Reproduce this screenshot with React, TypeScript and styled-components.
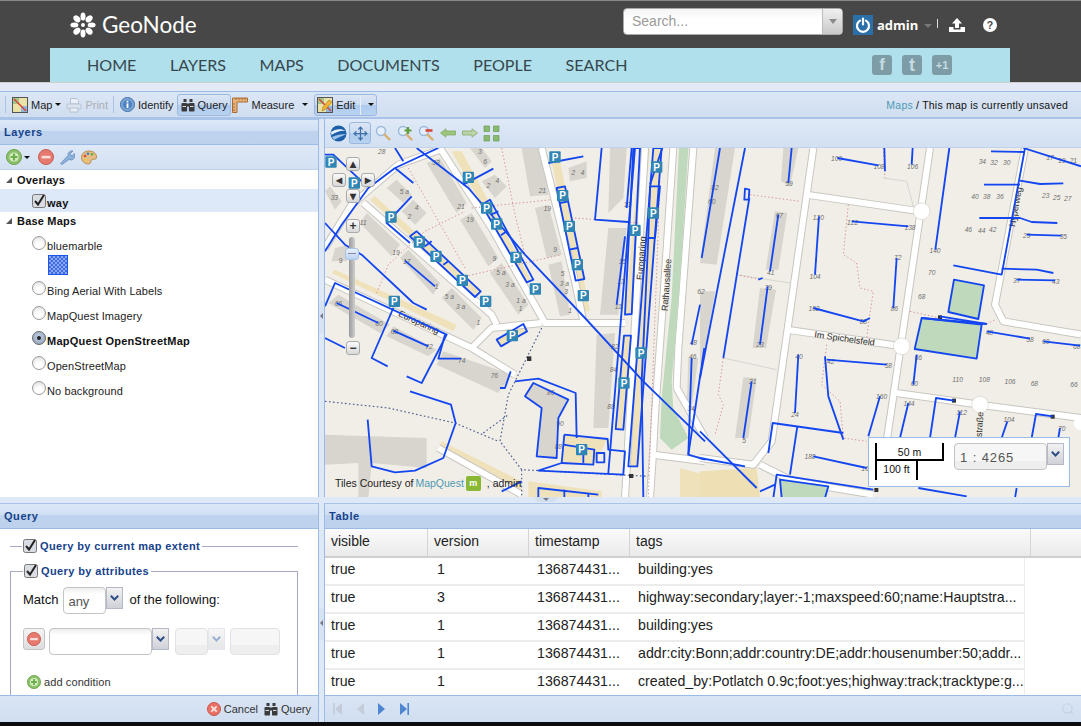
import React from "react";
import styled, { createGlobalStyle, css } from "styled-components";
import { Move, Search as SearchGlyph } from "lucide-react";

const GlobalStyle = createGlobalStyle`
  html, body {
    margin: 0;
    padding: 0;
    height: 726px;
    overflow: hidden;
    background: #dfe8f6;
    font-family: "Liberation Sans", Arial, sans-serif;
  }
  fieldset { min-width: 0; }
`;

const Page = styled.div`
  width: 1081px;
  height: 726px;
  display: flex;
  flex-direction: column;
  overflow: hidden;
`;

const Spacer = styled.span<{ $w: number }>`
  width: ${(p) => p.$w}px;
  flex: none;
`;

/* ---------- site header ---------- */
const SiteHeader = styled.header`
  height: 82px;
  flex: none;
  background: #474747;
  border-top: 1px solid #8a8a8a;
  box-sizing: border-box;
  display: flex;
  flex-direction: column;
`;
const HeaderTop = styled.div`
  height: 47px;
  display: flex;
  align-items: flex-start;
  padding-left: 70px;
`;
const Logo = styled.div`
  display: flex;
  align-items: center;
  gap: 6px;
  margin-top: 11px;
  color: #fff;
  font: 400 22.5px/26px Lato, sans-serif;
  width: 553px;
`;
const SearchBox = styled.div`
  width: 220px;
  height: 27px;
  margin-top: 7px;
  box-sizing: border-box;
  border-radius: 4px;
  border: 1px solid #aaa;
  background: linear-gradient(#f4f4f4, #fff 40%);
  display: flex;
  overflow: hidden;
`;
const SearchInput = styled.div`
  flex: 1;
  padding-left: 8px;
  color: #9a9a9a;
  font: 14px/24px "Liberation Sans", sans-serif;
`;
const SearchTrigger = styled.div`
  width: 19px;
  background: linear-gradient(#f0f0f0, #c9c9c9);
  border-left: 1px solid #bbb;
  display: flex;
  align-items: center;
  justify-content: center;
  &::after {
    content: "";
    border: 4px solid transparent;
    border-top: 5px solid #8a8a8a;
    border-bottom: 0;
  }
`;
const UserBlock = styled.div`
  display: flex;
  align-items: center;
  margin: 14px 0 0 10px;
`;
const PowerBadge = styled.div`
  width: 20px;
  height: 20px;
  background: #2a6fa8;
  display: flex;
  align-items: center;
  justify-content: center;
`;
const UserName = styled.span`
  color: #fff;
  font: 700 13px/20px "Open Sans", sans-serif;
  margin-left: 4px;
`;
const UserCaret = styled.span`
  margin: 2px 0 0 6px;
  border: 4px solid transparent;
  border-top: 4px solid #777;
  border-bottom: 0;
`;
const UserSep = styled.span`
  width: 1px;
  height: 9px;
  background: #ddd;
  margin: -4px 11px 0 5px;
`;
const Nav = styled.nav`
  margin-left: 50px;
  width: 960px;
  height: 34px;
  background: #b0e0ec;
  box-sizing: border-box;
  padding-left: 37px;
  display: flex;
  align-items: center;
  gap: 33.5px;
`;
const NavLink = styled.a`
  color: #37474d;
  font: 400 16.1px/34px Lato, sans-serif;
`;
const SocialGroup = styled.div`
  margin-left: auto;
  margin-right: 58px;
  display: flex;
  gap: 10px;
`;
const Social = styled.div<{ $size?: number }>`
  width: 20px;
  height: 20px;
  border-radius: 3px;
  background: #7e9ca6;
  color: #c4dce2;
  display: flex;
  align-items: center;
  justify-content: center;
  font: 700 ${(p) => p.$size ?? 17}px/20px "Liberation Sans", sans-serif;
`;

/* ---------- main toolbar ---------- */
const TopStrip = styled.div`
  height: 10px;
  flex: none;
  box-sizing: border-box;
  background: #e3e9f5;
  border-top: 1px solid #cfcfcf;
  border-bottom: 1px solid #99bbe8;
`;
const MainToolbar = styled.div`
  height: 27px;
  flex: none;
  box-sizing: border-box;
  background: linear-gradient(#dbe6f5, #d0def0);
  border-bottom: 2px solid #a9c4e8;
  display: flex;
  align-items: center;
  padding-left: 2px;
  padding-right: 13px;
  font-size: 11px;
  color: #222;
`;
const ToolSep = styled.span<{ $space?: number }>`
  width: 1px;
  height: 17px;
  background: #a9c4e8;
  margin: 0 ${(p) => p.$space ?? 4}px;
`;
const ToolButton = styled.div<{ $active?: boolean; $off?: boolean; $pad?: number; $left?: number }>`
  display: inline-flex;
  align-items: center;
  gap: 3px;
  height: 22px;
  padding: 0 ${(p) => p.$pad ?? 3}px;
  margin-left: ${(p) => p.$left ?? 0}px;
  box-sizing: border-box;
  border-radius: 3px;
  border: 1px solid transparent;
  white-space: nowrap;
  font: 11px/20px "Liberation Sans", sans-serif;
  ${(p) => p.$off && css`color: #9a9a9a; opacity: 0.7;`}
  ${(p) =>
    p.$active &&
    css`
      border-color: #9cb8de;
      background: linear-gradient(#dbe6f5 0, #cbdaf0 50%, #aecbee 52%, #b9d2f1 100%);
    `}
`;
const MoveButton = styled(ToolButton)`
  width: 22px;
  justify-content: center;
`;
const Caret = styled.span<{ $gap?: number }>`
  border: 3px solid transparent;
  border-top: 3px solid #111;
  border-bottom: 0;
  margin-left: ${(p) => p.$gap ?? 0}px;
`;
const SplitLine = styled.span`
  width: 1px;
  height: 20px;
  background: #e8f0fb;
  margin: 0 2px;
`;
const MapCrumb = styled.div`
  margin-left: auto;
  font: 10.5px/20px "Liberation Sans", sans-serif;
  letter-spacing: 0.22px;
  color: #111;
`;
const CrumbLink = styled.span`
  color: #4f9ab5;
`;

/* ---------- panels ---------- */
const Workspace = styled.div`
  display: grid;
  grid-template-columns: 319px 6px 1fr;
  grid-template-rows: 378px 6px 219px;
  flex: none;
`;
const Panel = styled.section<{ $edge?: boolean }>`
  display: flex;
  flex-direction: column;
  min-height: 0;
  overflow: hidden;
  background: #fff;
  box-sizing: border-box;
  border-right: ${(p) => (p.$edge ? "1px solid #99bbe8" : "0")};
`;
const PanelTitle = styled.div`
  height: 26px;
  flex: none;
  box-sizing: border-box;
  padding-left: 4px;
  color: #15428b;
  font: 700 11px/25px "Liberation Sans", sans-serif;
  letter-spacing: 0.55px;
  background: linear-gradient(#dce8f7, #cfdff3 46%, #bfd3ee 48%, #bcd1ed);
  border-top: 1px solid #a9c4e8;
  border-bottom: 1px solid #99bbe8;
`;
const Splitter = styled.div`
  background: #dfe8f6;
  position: relative;
  border-right: 1px solid #99bbe8;
  box-sizing: border-box;
`;
const HorizontalSplit = styled.div`
  grid-column: 1 / -1;
  background: #dfe8f6;
  position: relative;
`;
const CollapseHandle = styled.span<{ $top: number }>`
  position: absolute;
  left: 0;
  top: ${(p) => p.$top}px;
  width: 5px;
  height: 32px;
  background: #d7e3f3;
  &::after {
    content: "";
    position: absolute;
    top: 12px;
    left: 1px;
    border: 3px solid transparent;
    border-right: 3px solid #778;
    border-left: 0;
  }
`;
const MapSplitHandle = styled.span`
  position: absolute;
  left: 535px;
  top: 0;
  width: 22px;
  height: 5px;
  background: #d2dfef;
  border-radius: 0 0 6px 6px;
  &::after {
    content: "";
    position: absolute;
    left: 8px;
    top: 1px;
    border: 3px solid transparent;
    border-top: 3px solid #778;
    border-bottom: 0;
  }
`;
const IconBar = styled.div`
  height: 25px;
  flex: none;
  box-sizing: border-box;
  background: linear-gradient(#dfe9f7, #d2e0f2);
  border-bottom: 1px solid #c0d3ec;
  display: flex;
  align-items: center;
  padding-left: 6px;
`;
const MapToolbar = styled(IconBar)`
  height: 29px;
  padding-left: 5px;
`;

/* ---------- layer tree ---------- */
const TreeHead = styled.div<{ $height?: number }>`
  height: ${(p) => p.$height ?? 19}px;
  display: flex;
  align-items: center;
  font: 700 11px "Liberation Sans", sans-serif;
  letter-spacing: 0.2px;
  color: #111;
  padding-left: 6px;
  gap: 5px;
`;
const TreeArrow = styled.span`
  width: 0;
  height: 0;
  border-left: 6px solid transparent;
  border-bottom: 6px solid #555;
`;
const LayerRow = styled.div<{ $selected?: boolean; $height?: number; $top?: number }>`
  height: ${(p) => p.$height ?? 25}px;
  margin-top: ${(p) => p.$top ?? 0}px;
  display: flex;
  align-items: center;
  padding-left: 32px;
  gap: 1px;
  font: 11px "Liberation Sans", sans-serif;
  letter-spacing: 0.1px;
  color: #222;
  ${(p) => p.$selected && css`background: #dde8f8; font-weight: 700; color: #111;`}
`;
const RadioDot = styled.span<{ $on?: boolean }>`
  width: 14px;
  height: 14px;
  border-radius: 50%;
  box-sizing: border-box;
  border: 1px solid #9a9a9a;
  margin-top: -5px;
  flex: none;
  background: radial-gradient(circle at 50% 70%, #fff 30%, #d8d8d8 100%);
  display: flex;
  align-items: center;
  justify-content: center;
  ${(p) =>
    p.$on &&
    css`
      border-color: #666;
      background: radial-gradient(circle at 50% 40%, #b9c7dc 20%, #8b9ab4 100%);
      &::after {
        content: "";
        width: 4px;
        height: 4px;
        border-radius: 50%;
        background: #222;
      }
    `}
`;
const RowLabel = styled.span<{ $strong?: boolean; $shift?: number }>`
  margin-top: ${(p) => p.$shift ?? 1}px;
  ${(p) => p.$strong && css`font-weight: 700; color: #111; letter-spacing: 0.25px;`}
`;
const LegendSwatch = styled.div`
  width: 20px;
  height: 20px;
  margin: -3px 0 0 48px;
  box-sizing: border-box;
  border: 1px solid #1a55f0;
  background-color: #5f86ea;
  background-image: repeating-conic-gradient(#3d6ce6 0 25%, #8ba7ef 0 50%);
  background-size: 4px 4px;
`;
const CheckWrap = styled.span`
  display: inline-flex;
  flex: none;
`;

/* ---------- query form ---------- */
const QueryBody = styled.div`
  flex: 1;
  min-height: 0;
  overflow: hidden;
  padding: 10px 20px 0 10px;
  font: 11px "Liberation Sans", sans-serif;
`;
const QueryFieldset = styled.fieldset<{ $collapsed?: boolean }>`
  margin: 0 0 11px;
  padding: 0 0 0 12px;
  border: 0;
  border-top: 1px solid #a4a8c4;
  ${(p) =>
    !p.$collapsed &&
    css`
      border: 1px solid #a4a8c4;
      height: 200px;
    `}
`;
const QueryLegend = styled.legend`
  display: flex;
  align-items: center;
  gap: 3px;
  padding: 0 2px 0 1px;
  margin-left: 0;
  color: #15428b;
  font: 700 11px/14px "Liberation Sans", sans-serif;
  letter-spacing: 0.38px;
`;
const MatchRow = styled.div`
  display: flex;
  align-items: flex-start;
  margin-top: 9px;
  font: 13px/26px "Liberation Sans", sans-serif;
  color: #111;
`;
const FieldBox = styled.div<{ $w: number; $off?: boolean; $left?: number }>`
  width: ${(p) => p.$w}px;
  height: 27px;
  margin-left: ${(p) => p.$left ?? 0}px;
  box-sizing: border-box;
  flex: none;
  border: 1px solid ${(p) => (p.$off ? "#e2e2e2" : "#c4c4c4")};
  border-radius: 4px;
  padding-left: 4px;
  color: #555;
  font: 13px/28px "Liberation Sans", sans-serif;
  background: ${(p) =>
    p.$off ? "linear-gradient(#f6f6f6 0 65%, #eee 66%)" : "linear-gradient(#eee, #fff 25%)"};
`;
const ScaleField = styled(FieldBox)`
  font-size: 13px;
  padding-left: 5px;
  letter-spacing: 0.9px;
  background: linear-gradient(#f6f6f6 0 68%, #eee 69%);
`;
const FieldTrigger = styled.div<{ $off?: boolean }>`
  width: 17px;
  height: 22px;
  flex: none;
  box-sizing: border-box;
  border: 1px solid ${(p) => (p.$off ? "#d8dfea" : "#b5b8c8")};
  background: ${(p) =>
    p.$off ? "linear-gradient(#f3f3f3,#dcdcdc)" : "linear-gradient(#f2f2f2,#cfd1d8)"};
  display: flex;
  align-items: center;
  justify-content: center;
  opacity: ${(p) => (p.$off ? 0.7 : 1)};
`;
const FollowText = styled.span`
  margin-left: 6px;
`;
const ConditionRow = styled.div`
  display: flex;
  align-items: flex-start;
  margin-top: 14px;
`;
const RemoveButton = styled.div`
  width: 22px;
  height: 22px;
  box-sizing: border-box;
  margin-right: 4px;
  flex: none;
  border: 1px solid #c4c4c4;
  border-radius: 3px;
  background: linear-gradient(#f4f4f4, #ddd);
  display: flex;
  align-items: center;
  justify-content: center;
`;
const AddCondition = styled.div`
  display: flex;
  align-items: center;
  gap: 3px;
  margin: 19px 0 0 4px;
  color: #333;
  font: 11px/16px "Liberation Sans", sans-serif;
  letter-spacing: 0.1px;
`;
const PanelFooter = styled.div<{ $end?: boolean }>`
  height: 27px;
  flex: none;
  box-sizing: border-box;
  background: linear-gradient(#dae5f4, #d0def1);
  border-top: 1px solid #99bbe8;
  display: flex;
  align-items: center;
  gap: ${(p) => (p.$end ? "6px" : "10px")};
  justify-content: ${(p) => (p.$end ? "flex-end" : "flex-start")};
  padding: ${(p) => (p.$end ? "0 7px 0 0" : "0 6px 0 7px")};
`;
const FooterAction = styled.span`
  display: inline-flex;
  align-items: center;
  gap: 3px;
  color: #333;
  font: 11px "Liberation Sans", sans-serif;
`;
const PagerEnd = styled.span`
  margin-left: auto;
  display: flex;
`;

/* ---------- table ---------- */
const TableHead = styled.div`
  height: 29px;
  flex: none;
  box-sizing: border-box;
  display: grid;
  grid-template-columns: 103px 101px 101px 401px 1fr;
  background: linear-gradient(#fafafa, #f3f3f3 50%, #e9eaec);
  border-bottom: 2px solid #cfcfcf;
`;
const HeadCell = styled.div`
  box-sizing: border-box;
  padding-left: 6px;
  font: 14px/25px "Liberation Sans", sans-serif;
  color: #222;
  border-right: 1px solid #d4d4d4;
  &:last-child { border-right: 0; }
`;
const TableRows = styled.div`
  flex: 1;
  min-height: 0;
  overflow: hidden;
  width: 703px;
`;
const TableRow = styled.div`
  height: 28px;
  width: 700px;
  box-sizing: border-box;
  display: grid;
  grid-template-columns: 103px 101px 101px 1fr;
  border-bottom: 2px solid #ececec;
  border-right: 1px solid #ececec;
`;
const Cell = styled.div<{ $left: number }>`
  font: 14.2px/22px "Liberation Sans", sans-serif;
  color: #222;
  padding-left: ${(p) => p.$left}px;
  white-space: nowrap;
`;

/* ---------- map ---------- */
const MapArea = styled.div`
  position: relative;
  flex: 1;
  min-height: 0;
  overflow: hidden;
  background: #f0ede6;
`;
const MapSvg = styled.svg`
  display: block;
  width: 756px;
  height: 350px;
`;
const PadButton = styled.div<{ $x: number; $y: number }>`
  position: absolute;
  left: ${(p) => p.$x}px;
  top: ${(p) => p.$y}px;
  width: 14px;
  height: 14px;
  box-sizing: border-box;
  border: 1px solid #aaa;
  border-radius: 3px;
  background: linear-gradient(#fafafa, #d8d8d8);
  color: #333;
  display: flex;
  align-items: center;
  justify-content: center;
  font: 700 12px/12px "Liberation Sans", sans-serif;
`;
const SliderTrack = styled.div`
  position: absolute;
  left: 24px;
  top: 89px;
  width: 6px;
  height: 101px;
  border-radius: 3px;
  background: linear-gradient(90deg, #9a9a9a, #cfcfcf);
`;
const SliderHandle = styled.div`
  position: absolute;
  left: 20px;
  top: 100px;
  width: 14px;
  height: 12px;
  border-radius: 3px;
  border: 1px solid #a9c4e8;
  background: linear-gradient(#e8f0fb, #bcd3f2);
  box-sizing: border-box;
  &::after {
    content: "";
    display: block;
    margin: 4px 2px;
    height: 1px;
    background: #88a;
  }
`;
const Attribution = styled.div`
  position: absolute;
  left: 10px;
  bottom: 6px;
  display: flex;
  align-items: center;
  gap: 2px;
  color: #222;
  font: 10.5px/16px "Liberation Sans", sans-serif;
`;
const AttrLink = styled.span`
  color: #4f9ab5;
`;
const MqBadge = styled.span`
  width: 15px;
  height: 15px;
  margin-right: 4px;
  border-radius: 2px;
  background: #8ab835;
  color: #fff;
  font: 700 9px/15px "Liberation Sans", sans-serif;
  text-align: center;
`;
const ScaleBox = styled.div`
  position: absolute;
  left: 543px;
  top: 289px;
  width: 202px;
  height: 50px;
  box-sizing: border-box;
  background: #fff;
  border: 1px solid #99bbe8;
  display: flex;
  padding: 5px 0 0 6px;
`;
const ScaleBars = styled.div`
  width: 69px;
  flex: none;
  font: 10.5px/16px "Liberation Sans", sans-serif;
  color: #111;
  text-align: center;
`;
const ScaleTop = styled.div`
  height: 18px;
  box-sizing: border-box;
  border: 2px solid #000;
  border-top: 0;
  padding-top: 1px;
`;
const ScaleBottom = styled.div`
  height: 19px;
  width: 43px;
  box-sizing: border-box;
  border: 2px solid #000;
  border-top: 0;
  border-bottom: 0;
`;
const ScaleCombo = styled.div`
  display: flex;
  margin-left: 10px;
`;
const BottomEdge = styled.div`
  flex: 1;
  background: #0c0c10;
`;

/* ---------- small drawings ---------- */
const Flower = () => (
  <svg width="26" height="26" viewBox="-13 -13 26 26">
    {[0, 45, 90, 135, 180, 225, 270, 315].map((a) => (
      <ellipse key={a} cx="0" cy="-8.6" rx={a % 90 ? 2.9 : 2.5} ry="4" fill="#fff" transform={`rotate(${a})`} />
    ))}
    <circle r="2" fill="#fff" />
  </svg>
);
const PowerIcon = () => (
  <svg width="16" height="16" viewBox="0 0 16 16" fill="none" stroke="#fff" strokeWidth="2.2" strokeLinecap="round">
    <path d="M5 3.6a6 6 0 1 0 6 0" />
    <path d="M8 1.5v6" />
  </svg>
);
const UploadIcon = () => (
  <svg width="16" height="14" viewBox="0 0 16 14" fill="#fff">
    <path d="M8 0l5 5.5H10V10H6V5.5H3z" />
    <path d="M0 9h4.5v2.5h7V9H16v5H0z" />
  </svg>
);
const HelpIcon = () => (
  <svg width="14" height="14" viewBox="0 0 14 14">
    <circle cx="7" cy="7" r="7" fill="#fff" />
    <text x="7" y="11" textAnchor="middle" fontFamily="Liberation Sans" fontWeight="700" fontSize="10.5" fill="#474747">?</text>
  </svg>
);
const MapIcon = ({ pencil }: { pencil?: boolean }) => (
  <svg width="16" height="16" viewBox="0 0 16 16">
    <rect x=".5" y=".5" width="15" height="15" fill="#e9e3a8" stroke="#555" />
    <path d="M1 1h6v6H1z" fill="#9fc78a" />
    <path d="M9 9h6v6H9z" fill="#8fb7e0" />
    <path d="M2 2l12 12" stroke="#d8483a" strokeWidth="1.6" />
    {pencil && <path d="M5 14l1-4 6-7 3 2-6 7z" fill="#f2b632" stroke="#a5701a" strokeWidth=".6" />}
  </svg>
);
const PrintIcon = () => (
  <svg width="16" height="16" viewBox="0 0 16 16" fill="#dfe5ee" stroke="#a9b3c2">
    <path d="M4.5 7V1.5h6l2 2V7z" fill="#f4f6fa" />
    <rect x="1" y="7" width="14" height="5" rx="1.5" />
    <rect x="4" y="11" width="8" height="4" fill="#f4f6fa" />
  </svg>
);
const InfoIcon = () => (
  <svg width="15" height="15" viewBox="0 0 15 15">
    <circle cx="7.5" cy="7.5" r="7" fill="#7ea7d8" stroke="#3f6ea8" />
    <circle cx="7.5" cy="7.5" r="4.6" fill="#4f82c0" />
    <rect x="6.6" y="6.4" width="1.8" height="4.6" fill="#fff" />
    <rect x="6.6" y="3.8" width="1.8" height="1.7" fill="#fff" />
  </svg>
);
const Binoculars = () => (
  <svg width="14" height="14" viewBox="0 0 14 14" fill="#3b3b3b">
    <rect x="2.5" y="1" width="3" height="3" />
    <rect x="8.5" y="1" width="3" height="3" />
    <rect x="0.5" y="5" width="5.5" height="8.5" rx=".8" />
    <rect x="8" y="5" width="5.5" height="8.5" rx=".8" />
    <rect x="6" y="5.5" width="2" height="3" />
    <rect x="1.5" y="8" width="3.5" height="1" fill="#ddd" />
    <rect x="9" y="8" width="3.5" height="1" fill="#ddd" />
  </svg>
);
const RulerIcon = () => (
  <svg width="16" height="16" viewBox="0 0 16 16">
    <path d="M.5 1h15v4H5v10.5H.5z" fill="#e6b27a" stroke="#a86c34" />
    <path d="M4 1v2M7 1v2M10 1v2M13 1v2M1 7h2M1 10h2M1 13h2" stroke="#a86c34" />
  </svg>
);
const PlusCircle = ({ size = 16 }: { size?: number }) => (
  <svg width={size} height={size} viewBox="0 0 16 16">
    <circle cx="8" cy="8" r="7.5" fill="#8cc06a" stroke="#6aa24c" />
    <circle cx="8" cy="8" r="4.6" fill="#d6eec4" />
    <path d="M8 4.6v6.8M4.6 8h6.8" stroke="#6fae4e" strokeWidth="2.2" />
  </svg>
);
const MinusCircle = ({ size = 16 }: { size?: number }) => (
  <svg width={size} height={size} viewBox="0 0 16 16">
    <circle cx="8" cy="8" r="7.5" fill="#e77a6f" stroke="#c65a50" />
    <rect x="3.6" y="6.8" width="8.8" height="2.6" fill="#f7e0dc" />
  </svg>
);
const WrenchIcon = () => (
  <svg width="16" height="16" viewBox="0 0 16 16">
    <path d="M1.5 14.5l1-1 6.5-7a4 4 0 0 1 5-4.500L11.500 4.500l.5 1.800 1.800.5L15 4.500a4 4 0 0 1-5 6L3 15.500z" fill="#8eb1dc" stroke="#5f86b8" strokeWidth=".7" />
  </svg>
);
const PaletteIcon = () => (
  <svg width="16" height="15" viewBox="0 0 16 15">
    <path d="M8 1c4.500 0 7.500 2.500 7.500 6 0 3-3 2-4.500 2.500-1.500.5-.5 4.500-3.500 4.500C3.500 14 .5 11 .5 7.500 .5 3.500 4 1 8 1z" fill="#e5bd85" stroke="#b98c50" />
    <circle cx="4" cy="6" r="1.300" fill="#d8483a" />
    <circle cx="7" cy="3.800" r="1.300" fill="#3f7ecf" />
    <circle cx="11" cy="4.300" r="1.300" fill="#5fae4a" />
    <circle cx="4.600" cy="10" r="1.300" fill="#e9d23f" />
  </svg>
);
const CheckedBox = ({ size = 14 }: { size?: number }) => (
  <svg width={size} height={size} viewBox="0 0 14 14">
    <rect x=".5" y=".5" width="13" height="13" rx="2" fill="#d9dde3" stroke="#777" />
    <path d="M3 7l3 3.500L12 1" fill="none" stroke="#222" strokeWidth="2" />
  </svg>
);
const Chevron = ({ color = "#2f4f85" }: { color?: string }) => (
  <svg width="9" height="6" viewBox="0 0 9 6">
    <path d="M.8.8L4.500 4.500 8.200.8" fill="none" stroke={color} strokeWidth="2" />
  </svg>
);
const CancelIcon = () => (
  <svg width="14" height="14" viewBox="0 0 14 14">
    <circle cx="7" cy="7" r="6.500" fill="#ea7166" stroke="#c9564c" />
    <path d="M4.300 4.300l5.400 5.400M9.700 4.300l-5.400 5.400" stroke="#fbe4e0" strokeWidth="1.800" />
  </svg>
);
const GlobeIcon = () => (
  <svg width="17" height="17" viewBox="0 0 17 17">
    <circle cx="8.500" cy="8.500" r="8" fill="#1d5fa8" />
    <path d="M1 7c4-3 10-4 15-1-5-1-10 1-14.500 4z" fill="#eaf2fb" />
    <path d="M2 12c4-2 9-3 14-3-3 2-8 3.500-12 6z" fill="#9cc3ea" />
  </svg>
);
const MagnifierIcon = ({ mark }: { mark?: "plus" | "minus" }) => (
  <svg width="16" height="16" viewBox="0 0 16 16">
    <circle cx="6" cy="6" r="4.500" fill="#e3effb" stroke="#9cb8da" strokeWidth="1.400" />
    <path d="M9.500 9.500L14.500 14.500" stroke="#d9ae72" strokeWidth="2.400" strokeLinecap="round" />
    {mark === "plus" && <path d="M11 2v7M7.500 5.500h7" stroke="#5f9e3a" strokeWidth="2.200" />}
    {mark === "minus" && <path d="M7.500 5.500h7" stroke="#d8483a" strokeWidth="2.600" />}
  </svg>
);
const ArrowIcon = ({ flip }: { flip?: boolean }) => (
  <svg width="16" height="10" viewBox="0 0 16 10" transform={flip ? "scale(-1 1)" : undefined}>
    <path d="M.5 5L6 .8V3h9.500v4H6v2.200z" fill={flip ? "#bdd3a8" : "#9cc67c"} stroke="#7da360" strokeWidth=".7" />
  </svg>
);
const ExtentIcon = () => (
  <svg width="17" height="17" viewBox="0 0 17 17" fill="#8aba72" stroke="#6a9c55" strokeWidth=".7">
    <path d="M1 1h5.500v5.500H1zM10.500 1H16v5.500h-5.500zM1 10.500h5.500V16H1zM10.500 10.500H16V16h-5.500z" />
  </svg>
);
const PagerIcon = ({ kind, off }: { kind: "first" | "prev" | "next" | "last"; off?: boolean }) => {
  const fill = off ? "#c3ccd8" : "#4f86d2";
  const back = kind === "first" || kind === "prev";
  return (
    <svg width="12" height="14" viewBox="0 0 12 14">
      {back ? <path d="M10 1v12L3 7z" fill={fill} /> : <path d="M2 1v12l7-6z" fill={fill} />}
      {kind === "first" && <rect x="1" y="1" width="1.600" height="12" fill={fill} />}
      {kind === "last" && <rect x="9.400" y="1" width="1.600" height="12" fill={fill} />}
    </svg>
  );
};

/* ---------- map drawing data, in 3x coordinates of the two halves ---------- */
type Pts = number[];
const toPts = (p: Pts) => p.reduce((s, v, i) => s + (i % 2 ? `,${v} ` : `${v}`), "");

const westBuildings: Pts[] = [
  [305, 45, 345, 30, 425, 165, 395, 195],
  [405, 215, 440, 195, 520, 330, 490, 355],
  [495, 375, 530, 345, 610, 470, 580, 500],
  [350, 450, 380, 420, 470, 510, 445, 545],
  [225, 330, 250, 305, 345, 405, 325, 440],
  [105, 225, 125, 195, 225, 290, 200, 325],
  [185, 120, 215, 95, 260, 140, 235, 165],
  [230, 190, 265, 155, 305, 195, 270, 230],
  [0, 130, 15, 115, 50, 160, 30, 185],
  [435, 0, 470, 0, 500, 40, 480, 60],
  [470, 100, 510, 80, 545, 115, 510, 150],
  [590, 0, 650, 0, 670, 140, 615, 145],
  [630, 180, 670, 170, 710, 320, 665, 330],
  [670, 350, 710, 340, 735, 500, 705, 505],
  [730, 60, 785, 40, 785, 90, 735, 100],
  [850, 240, 905, 240, 880, 500, 825, 500],
  [855, 0, 905, 0, 895, 150, 850, 195],
  [815, 560, 870, 555, 850, 840, 805, 840],
  [30, 300, 70, 290, 65, 340, 20, 340],
  [10, 465, 40, 440, 195, 530, 165, 555],
  [185, 565, 205, 535, 335, 605, 310, 625],
  [335, 650, 355, 610, 560, 680, 520, 735],
  [600, 745, 625, 705, 730, 755, 700, 810, 695, 930, 635, 925, 650, 780],
  [0, 860, 305, 870, 305, 960, 140, 945, 130, 1050, 100, 1050, 100, 945, 0, 950],
  [1090, 630, 1120, 630, 1100, 780, 1085, 780],
];
const westYellow: Pts[] = [
  [380, 10, 410, 10, 620, 400, 600, 405],
  [680, 40, 705, 40, 795, 490, 770, 490],
  [135, 155, 150, 145, 470, 430, 455, 445],
  [20, 375, 30, 365, 395, 530, 385, 550],
  [900, 500, 925, 500, 975, 0, 945, 0],
  [872, 843, 895, 845, 918, 563, 897, 563],
  [910, 955, 937, 955, 1012, 0, 985, 0],
  [718, 860, 848, 873, 805, 950, 712, 945],
  [515, 575, 595, 528, 606, 550, 528, 595],
  [350, 880, 590, 1000, 590, 1050, 340, 905],
  [610, 1000, 830, 1030, 830, 1050, 610, 1050],
  [1065, 960, 1140, 980, 1140, 1050, 1065, 1050],
];
const westRoads: Pts[] = [
  [345, 0, 500, 240, 660, 525, 900, 525],
  [650, 0, 750, 400, 775, 520],
  [115, 165, 500, 500, 515, 530],
  [0, 395, 440, 600, 570, 680],
  [440, 600, 500, 540, 650, 525],
  [0, 300, 80, 170, 220, 50, 345, 5],
  [960, 0, 900, 1050],
  [1045, 0, 1015, 450, 990, 800, 985, 900, 975, 1050],
  [1105, 0, 1060, 600, 1055, 720, 1140, 870],
  [985, 920, 1140, 940],
  [340, 900, 590, 1040],
];
const eastBuildings: Pts[] = [
  [45, 0, 105, 0, 50, 350, 0, 345],
  [0, 430, 45, 430, 10, 650, 0, 650],
  [250, 0, 295, 0, 270, 115, 243, 100],
  [225, 190, 262, 195, 235, 365, 197, 365],
  [180, 420, 228, 425, 198, 600, 158, 600],
  [130, 688, 170, 690, 145, 870, 105, 870],
];
const eastRoads: Pts[] = [
  [340, 0, 215, 880, 160, 950, 0, 930],
  [320, 140, 660, 190],
  [690, 0, 560, 880],
  [260, 545, 605, 595],
  [590, 735, 840, 770, 1143, 810],
  [975, 0, 885, 470, 910, 520, 1143, 560],
  [180, 950, 280, 1000, 520, 1040],
];
const westBlue: Pts[] = [
  [275, 0, 430, 120, 520, 225, 600, 320, 780, 510, 955, 700, 1140, 880],
  [0, 310, 50, 230, 130, 120, 210, 60, 340, 0],
  [210, 0, 235, 40],
  [210, 60, 265, 105],
  [0, 20, 25, 20, 110, 100],
  [0, 225, 60, 290, 110, 320, 265, 465, 305, 485],
  [670, 45, 775, 25],
  [415, 110, 505, 62],
  [260, 145, 185, 225, 255, 285],
  [240, 338, 330, 415],
  [35, 465, 160, 525],
  [0, 570, 60, 600],
  [205, 548, 310, 595],
  [0, 475, 30, 405, 365, 560, 290, 705, 245, 685],
  [205, 480, 140, 630, 188, 655],
  [360, 560, 340, 632, 408, 632],
  [557, 670, 540, 720, 525, 720],
  [255, 730, 378, 770, 392, 825, 355, 930, 270, 968, 210, 973, 140, 955, 128, 815],
  [570, 700, 640, 692, 752, 735, 755, 870],
  [718, 860, 848, 873, 850, 905, 900, 910, 895, 980, 640, 968, 710, 945, 718, 860],
  [710, 945, 805, 950, 808, 905, 715, 890],
  [775, 945, 775, 905],
  [640, 1050, 640, 1020, 820, 1040],
  [718, 1025, 718, 1050],
  [790, 1035, 790, 1050],
  [830, 0, 810, 215, 910, 222],
  [920, 0, 905, 180],
  [900, 265, 875, 470],
  [930, 0, 850, 975],
  [955, 1050, 950, 700, 970, 270, 990, 270, 1005, 115, 975, 115, 970, 270],
  [1012, 0, 975, 110],
  [1100, 630, 1090, 920, 1140, 935],
  [1138, 600, 1090, 920],
  [1125, 470, 1100, 590],
  [590, 1000, 530, 1030],
  [705, 165, 730, 160],
  [733, 305, 757, 300],
  [300, 295, 320, 280],
  [355, 350, 370, 340],
  [498, 200, 520, 190],
  [528, 262, 545, 250],
];
const westBlueClosed: Pts[] = [
  [600, 745, 625, 705, 730, 755, 700, 810, 695, 930, 635, 925, 650, 780],
  [815, 915, 838, 915, 838, 943, 815, 943],
  [515, 575, 595, 528, 606, 550, 528, 595],
  [255, 265, 275, 250, 467, 430, 450, 447],
  [470, 170, 495, 155, 625, 395, 605, 403],
  [695, 120, 720, 115, 778, 393, 752, 398],
  [900, 500, 920, 498, 945, 0, 925, 0],
  [872, 843, 895, 845, 918, 563, 897, 563],
  [910, 955, 937, 955, 1010, 0, 985, 0],
];
const eastBlue: Pts[] = [
  [60, 0, 5, 330],
  [135, 0, 0, 690],
  [148, 150, 70, 630],
  [275, 0, 265, 105],
  [412, 30, 535, 52],
  [553, 0, 555, 70],
  [638, 0, 635, 50],
  [748, 0, 706, 305],
  [873, 10, 975, 12],
  [970, 0, 1143, 55],
  [975, 0, 905, 380, 760, 352],
  [852, 110, 960, 110],
  [960, 98, 1020, 108, 1090, 106],
  [905, 362, 1010, 365, 1060, 375],
  [838, 210, 960, 210, 995, 222, 1072, 225],
  [980, 260, 1085, 263],
  [950, 395, 1065, 397],
  [455, 220, 625, 235],
  [357, 205, 345, 380],
  [590, 330, 580, 480],
  [340, 480, 490, 520, 510, 510],
  [235, 200, 210, 370],
  [203, 415, 180, 590],
  [155, 700, 130, 870],
  [295, 620, 285, 795],
  [380, 635, 560, 650],
  [375, 625, 385, 745, 430, 875],
  [205, 915, 218, 825, 430, 855],
  [540, 745, 505, 865],
  [860, 550, 990, 572],
  [1030, 580, 1140, 593],
  [650, 620, 640, 710],
  [292, 835, 270, 980],
  [340, 925, 500, 960],
  [220, 1050, 230, 980, 520, 1025],
  [0, 930, 135, 955],
  [180, 1030, 225, 1010],
  [0, 850, 170, 1020],
  [625, 765, 600, 870],
  [690, 870, 708, 750, 762, 758],
  [780, 790, 765, 870],
  [922, 820, 905, 870],
  [995, 870, 1008, 798, 1058, 805],
  [1080, 840, 1075, 870],
  [665, 510, 860, 528],
  [720, 505, 860, 528],
  [375, 1050, 385, 1015, 240, 995, 245, 1050],
  [655, 1020, 800, 1045],
  [950, 1020, 945, 1050],
  [175, 395, 188, 390],
];
const eastBlueClosed: Pts[] = [
  [762, 395, 852, 412, 835, 513, 745, 492],
  [665, 510, 845, 530, 830, 632, 644, 603],
  [135, 122, 148, 125, 146, 155, 133, 155],
];
const westPink: Pts[] = [
  [155, 435, 190, 350, 300, 250, 420, 190],
  [440, 180, 680, 155],
  [250, 60, 420, 360],
  [530, 0, 570, 200, 600, 320],
  [420, 385, 710, 320],
  [750, 210, 940, 225],
  [1005, 100, 970, 1050],
];
const eastPink: Pts[] = [
  [445, 170, 430, 320, 470, 345, 480, 420, 520, 430, 505, 530, 500, 570],
  [150, 140, 300, 160],
  [110, 380, 180, 395],
  [380, 590, 365, 710, 420, 760, 430, 870, 500, 880],
  [70, 630, 55, 740, 70, 770, 45, 860],
  [630, 490, 720, 510],
  [860, 528, 885, 515],
  [550, 0, 555, 90],
];
const eastThin: Pts[] = [
  [550, 90, 620, 100, 640, 175],
  [70, 630, 230, 665],
  [110, 380, 270, 405],
];
const navyDots: Pts[] = [
  [650, 540, 550, 740, 525, 880, 590, 965, 970, 985],
  [0, 760, 190, 780, 390, 825, 520, 880],
  [475, 855, 550, 800],
  [590, 965, 590, 1050],
];
const parkings: Pts = [
  18, 42, 430, 88, 690, 27, 995, 57, 198, 207, 283, 282, 333, 325, 412, 397, 482, 460, 485, 180,
  515, 228, 573, 328, 631, 423, 713, 143, 733, 235, 757, 350, 775, 443, 930, 247, 985, 195, 948,
  615, 897, 705, 562, 563, 208, 460, 770, 905, 88, 105,
];
const westNumbers: [number, number, string][] = [
  [28, 150, "33"], [238, 130, "5 a"], [275, 180, "4"], [253, 205, "2"], [333, 45, "33"], [408, 175, "21"],
  [435, 215, "19"], [508, 333, "9"], [528, 373, "5 a"], [555, 410, "3 a"], [588, 458, "1 a"], [587, 483, "1"],
  [373, 447, "5 a"], [407, 477, "3 a"], [460, 523, "1"], [213, 315, "19"], [245, 340, "17"], [115, 225, "11"],
  [47, 338, "9"], [335, 415, "1"], [40, 467, "66"], [162, 527, "60"], [208, 550, "68"], [312, 597, "72"],
  [410, 638, "74"], [508, 683, "76"], [677, 733, "86"], [705, 828, "90"], [700, 897, "88"], [465, 12, "3"],
  [480, 40, "6"], [490, 113, "2"], [517, 97, "4"], [652, 127, "21"], [667, 183, "19"], [690, 305, "9"],
  [713, 378, "5"], [718, 407, "3 a"], [723, 432, "3"], [735, 487, "1"], [745, 75, "2"], [773, 73, "4"],
  [907, 170, "13"], [892, 340, "15"], [888, 400, "13"], [880, 477, "11"], [870, 595, "82"], [865, 665, "84"],
  [858, 775, "88"], [1105, 583, "48"], [1103, 627, "46"], [1098, 782, "34"], [170, 12, "28"], [1128, 432, "62"],
];
const eastNumbers: [number, number, string][] = [
  [410, 33, "100"], [537, 55, "108"], [638, 55, "106"], [847, 42, "34"], [882, 45, "32"], [920, 45, "30"],
  [1050, 30, "17"], [1085, 38, "19"], [1120, 38, "21"], [825, 145, "40"], [860, 145, "38"], [900, 145, "36"],
  [1037, 143, "23"], [1070, 150, "25"], [1103, 153, "27"], [805, 245, "46"], [845, 247, "44"], [878, 245, "42"],
  [980, 262, "29"], [1090, 267, "35"], [355, 210, "120"], [458, 225, "122"], [630, 238, "138"], [705, 308, "140"],
  [695, 375, "70"], [665, 445, "68"], [950, 398, "37"], [1067, 400, "43"], [593, 330, "72"], [583, 483, "86"],
  [345, 385, "104"], [342, 483, "102"], [490, 520, "88"], [45, 120, "82"], [35, 160, "60"], [267, 107, "59"],
  [238, 202, "67"], [212, 375, "41"], [205, 420, "39"], [180, 590, "23"], [158, 702, "21"], [132, 877, "5"],
  [297, 625, "40"], [392, 640, "42"], [565, 652, "58"], [655, 628, "66"], [643, 708, "60"], [285, 800, "24"],
  [545, 745, "160"], [627, 768, "144"], [785, 795, "112"], [927, 815, "104"], [1085, 843, "70"], [868, 555, "48"],
  [990, 575, "58"], [1037, 582, "60"], [1130, 597, "68"], [773, 696, "110"], [853, 695, "108"], [930, 702, "106"],
  [1003, 707, "68"], [1122, 710, "66"], [330, 925, "188"], [495, 962, "16"],
];

const Lines = ({ items, stroke, width, dash }: { items: Pts[]; stroke: string; width: number; dash?: string }) => (
  <g fill="none" stroke={stroke} strokeWidth={width} strokeDasharray={dash} strokeLinejoin="round">
    {items.map((p, i) => (
      <polyline key={i} points={toPts(p)} />
    ))}
  </g>
);
const Closed = ({ items, stroke, width }: { items: Pts[]; stroke: string; width: number }) => (
  <g fill="none" stroke={stroke} strokeWidth={width} strokeLinejoin="round">
    {items.map((p, i) => (
      <polygon key={i} points={toPts(p)} />
    ))}
  </g>
);
const Shapes = ({ items, fill }: { items: Pts[]; fill: string }) => (
  <g fill={fill}>
    {items.map((p, i) => (
      <polygon key={i} points={toPts(p)} />
    ))}
  </g>
);
const Numbers = ({ items }: { items: [number, number, string][] }) => (
  <g fontFamily="Liberation Sans" fontStyle="italic" fontSize="20" fill="#6f6f6f" textAnchor="middle">
    {items.map(([x, y, t], i) => (
      <text key={i} x={x} y={y + 7}>{t}</text>
    ))}
  </g>
);
const StreetLabel = ({ x, y, r, children }: { x: number; y: number; r: number; children: string }) => (
  <text x={x} y={y} transform={`rotate(${r} ${x} ${y})`} fontFamily="Liberation Sans" fontSize="27" fill="#2f2f2f" stroke="#f0ede6" strokeWidth="3" paintOrder="stroke">
    {children}
  </text>
);

const MapPicture = () => (
  <MapSvg viewBox="0 0 756 350">
    <rect width="756" height="350" fill="#f1eee7" />
    <g transform="scale(0.33333)">
      <Shapes items={westBuildings} fill="#d8d5ce" />
      <Shapes items={westYellow} fill="#efe2bb" />
      <Lines items={westRoads} stroke="#c8c6c1" width={24} />
      <Lines items={westRoads} stroke="#fff" width={18} />
      <polygon points="1062,0 1090,0 1062,450 1040,700 1045,780 1090,870 1040,905 1005,870 1010,750 1040,450" fill="#bfd9bc" />
    </g>
    <g transform="translate(375 0) scale(0.33333)">
      <polygon points="0,970 170,960 180,1050 0,1050" fill="#efdfb5" />
      <Shapes items={eastBuildings} fill="#d8d5ce" />
      <Lines items={eastRoads} stroke="#c8c6c1" width={24} />
      <Lines items={eastRoads} stroke="#fff" width={18} />
      <circle cx="665" cy="190" r="25" fill="#fff" stroke="#d4d2cc" strokeWidth="2" />
      <circle cx="605" cy="595" r="25" fill="#fff" stroke="#d4d2cc" strokeWidth="2" />
      <circle cx="840" cy="770" r="25" fill="#fff" stroke="#d4d2cc" strokeWidth="2" />
      <circle cx="1143" cy="825" r="22" fill="#fff" />
      <polygon points="762,395 852,412 835,513 745,492" fill="#bfd9bc" />
      <polygon points="665,510 845,530 830,632 644,603" fill="#bfd9bc" />
      <polygon points="240,995 385,1015 375,1050 245,1050" fill="#bfd9bc" />
      <Lines items={eastThin} stroke="#c9c7c2" width={2} />
      <Lines items={eastPink} stroke="#d59090" width={3} dash="4 7" />
    </g>
    <g transform="scale(0.33333)">
      <Lines items={westPink} stroke="#d59090" width={3} dash="4 7" />
      <Lines items={navyDots} stroke="#4e5f93" width={3.500} dash="5 7" />
      <rect x="606" y="625" width="13" height="14" fill="#333" />
      <rect x="912" y="978" width="13" height="12" fill="#333" />
      <Numbers items={westNumbers} />
      <StreetLabel x={218} y={503} r={25}>Europaring</StreetLabel>
      <StreetLabel x={953} y={397} r={-86}>Europaring</StreetLabel>
      <StreetLabel x={1028} y={490} r={-86}>Rathausallee</StreetLabel>
    </g>
    <g transform="translate(375 0) scale(0.33333)">
      <rect x="714" y="502" width="12" height="12" fill="#333" />
      <rect x="756" y="752" width="12" height="12" fill="#333" />
      <rect x="1052" y="800" width="12" height="12" fill="#333" />
      <rect x="523" y="1020" width="12" height="12" fill="#333" />
      <Numbers items={eastNumbers} />
      <StreetLabel x={342} y={568} r={8}>Im Spichelsfeld</StreetLabel>
      <StreetLabel x={945} y={238} r={-80}>Hyperweg</StreetLabel>
      <StreetLabel x={845} y={868} r={-86}>straße</StreetLabel>
    </g>
    <g transform="scale(0.33333)">
      <Lines items={westBlue} stroke="#1346f0" width={5.500} />
      <Closed items={westBlueClosed} stroke="#1346f0" width={5.500} />
      <g fontFamily="Liberation Sans" fontWeight="700" fontSize="30" textAnchor="middle">
        {parkings.map((v, i, a) =>
          i % 2 ? null : (
            <g key={i}>
              <rect x={v - 17} y={a[i + 1] - 17} width="34" height="34" rx="3" fill="#2f86b5" />
              <text x={v} y={a[i + 1] + 11} fill="#fff">P</text>
            </g>
          )
        )}
      </g>
    </g>
    <g transform="translate(375 0) scale(0.33333)">
      <Lines items={eastBlue} stroke="#1346f0" width={5.500} />
      <Closed items={eastBlueClosed} stroke="#1346f0" width={5.500} />
    </g>
  </MapSvg>
);

const rows = [
  ["true", "1", "136874431...", "building:yes"],
  ["true", "3", "136874431...", "highway:secondary;layer:-1;maxspeed:60;name:Hauptstra..."],
  ["true", "1", "136874431...", "building:yes"],
  ["true", "1", "136874431...", "addr:city:Bonn;addr:country:DE;addr:housenumber:50;addr..."],
  ["true", "1", "136874431...", "created_by:Potlatch 0.9c;foot:yes;highway:track;tracktype:g..."],
];
const baseMaps = ["Bing Aerial With Labels", "MapQuest Imagery", "MapQuest OpenStreetMap", "OpenStreetMap", "No background"];
const navItems = ["HOME", "LAYERS", "MAPS", "DOCUMENTS", "PEOPLE", "SEARCH"];

export default function App() {
  return (
    <Page>
      <GlobalStyle />
      <SiteHeader>
        <HeaderTop>
          <Logo>
            <Flower />
            GeoNode
          </Logo>
          <SearchBox>
            <SearchInput>Search...</SearchInput>
            <SearchTrigger />
          </SearchBox>
          <UserBlock>
            <PowerBadge><PowerIcon /></PowerBadge>
            <UserName>admin</UserName>
            <UserCaret />
            <UserSep />
            <UploadIcon />
            <Spacer $w={18} />
            <HelpIcon />
          </UserBlock>
        </HeaderTop>
        <Nav>
          {navItems.map((n) => (
            <NavLink key={n}>{n}</NavLink>
          ))}
          <SocialGroup>
            <Social>f</Social>
            <Social $size={18}>t</Social>
            <Social $size={11}>+1</Social>
          </SocialGroup>
        </Nav>
      </SiteHeader>

      <TopStrip />
      <MainToolbar>
        <ToolSep $space={3} />
        <ToolButton $pad={2}><MapIcon />Map<Caret /></ToolButton>
        <ToolButton $off $pad={1}><PrintIcon />Print</ToolButton>
        <ToolSep $space={3} />
        <ToolButton $pad={2}><InfoIcon />Identify</ToolButton>
        <ToolButton $active $pad={3}><Binoculars />Query</ToolButton>
        <ToolButton $pad={0}><RulerIcon />Measure<Caret $gap={5} /></ToolButton>
        <ToolButton $active $pad={2} $left={5}>
          <MapIcon pencil />Edit<SplitLine /><Caret $gap={2} />
        </ToolButton>
        <MapCrumb><CrumbLink>Maps</CrumbLink> / This map is currently unsaved</MapCrumb>
      </MainToolbar>

      <Workspace>
        <Panel $edge>
          <PanelTitle>Layers</PanelTitle>
          <IconBar>
            <PlusCircle />
            <Spacer $w={2} />
            <Caret />
            <Spacer $w={8} />
            <MinusCircle />
            <Spacer $w={5} />
            <WrenchIcon />
            <Spacer $w={6} />
            <PaletteIcon />
          </IconBar>
          <TreeHead><TreeArrow />Overlays</TreeHead>
          <LayerRow $selected $height={23}>
            <CheckWrap><CheckedBox /></CheckWrap>
            <RowLabel $strong $shift={5}>way</RowLabel>
          </LayerRow>
          <TreeHead $height={18}><TreeArrow />Base Maps</TreeHead>
          <LayerRow $top={3}>
            <RadioDot />
            <RowLabel>bluemarble</RowLabel>
          </LayerRow>
          <LegendSwatch />
          {baseMaps.map((m, i) => (
            <LayerRow key={m} $top={i === 0 ? 3 : 0}>
              <RadioDot $on={i === 2} />
              <RowLabel $strong={i === 2}>{m}</RowLabel>
            </LayerRow>
          ))}
        </Panel>
        <Splitter><CollapseHandle $top={182} /></Splitter>
        <Panel>
          <MapToolbar>
            <GlobeIcon />
            <Spacer $w={2} />
            <MoveButton $active $pad={2}>
              <Move size={15} color="#3f6ea8" strokeWidth={2} />
            </MoveButton>
            <Spacer $w={4} />
            <MagnifierIcon />
            <Spacer $w={6} />
            <MagnifierIcon mark="plus" />
            <Spacer $w={5} />
            <MagnifierIcon mark="minus" />
            <Spacer $w={6} />
            <ArrowIcon />
            <Spacer $w={6} />
            <ArrowIcon flip />
            <Spacer $w={5} />
            <ExtentIcon />
          </MapToolbar>
          <MapArea>
            <MapPicture />
            <PadButton $x={21} $y={9}>▴</PadButton>
            <PadButton $x={7} $y={25}>◂</PadButton>
            <PadButton $x={36} $y={25}>▸</PadButton>
            <PadButton $x={21} $y={41}>▾</PadButton>
            <PadButton $x={21} $y={71}>+</PadButton>
            <SliderTrack />
            <SliderHandle />
            <PadButton $x={21} $y={193}>−</PadButton>
            <Attribution>
              Tiles Courtesy of <AttrLink>MapQuest</AttrLink><MqBadge>m</MqBadge>, admin
            </Attribution>
            <ScaleBox>
              <ScaleBars>
                <ScaleTop>50 m</ScaleTop>
                <ScaleBottom>100 ft</ScaleBottom>
              </ScaleBars>
              <ScaleCombo>
                <ScaleField $w={93}>1 : 4265</ScaleField>
                <FieldTrigger><Chevron /></FieldTrigger>
              </ScaleCombo>
            </ScaleBox>
          </MapArea>
        </Panel>

        <HorizontalSplit><MapSplitHandle /></HorizontalSplit>

        <Panel $edge>
          <PanelTitle>Query</PanelTitle>
          <QueryBody>
            <QueryFieldset $collapsed>
              <QueryLegend><CheckedBox />Query by current map extent</QueryLegend>
            </QueryFieldset>
            <QueryFieldset>
              <QueryLegend><CheckedBox />Query by attributes</QueryLegend>
              <MatchRow>
                Match
                <FieldBox $w={43} $left={5}>any</FieldBox>
                <FieldTrigger><Chevron /></FieldTrigger>
                <FollowText>of the following:</FollowText>
              </MatchRow>
              <ConditionRow>
                <RemoveButton><MinusCircle size={14} /></RemoveButton>
                <FieldBox $w={103} />
                <FieldTrigger><Chevron /></FieldTrigger>
                <FieldBox $w={33} $off $left={6} />
                <FieldTrigger $off><Chevron color="#6f8fc0" /></FieldTrigger>
                <FieldBox $w={50} $off $left={5} />
              </ConditionRow>
              <AddCondition><PlusCircle size={14} />add condition</AddCondition>
            </QueryFieldset>
          </QueryBody>
          <PanelFooter $end>
            <FooterAction><CancelIcon />Cancel</FooterAction>
            <FooterAction><Binoculars />Query</FooterAction>
          </PanelFooter>
        </Panel>
        <Splitter><CollapseHandle $top={105} /></Splitter>
        <Panel>
          <PanelTitle>Table</PanelTitle>
          <TableHead>
            <HeadCell>visible</HeadCell>
            <HeadCell>version</HeadCell>
            <HeadCell>timestamp</HeadCell>
            <HeadCell>tags</HeadCell>
            <HeadCell />
          </TableHead>
          <TableRows>
            {rows.map((r, i) => (
              <TableRow key={i}>
                <Cell $left={6}>{r[0]}</Cell>
                <Cell $left={9}>{r[1]}</Cell>
                <Cell $left={8}>{r[2]}</Cell>
                <Cell $left={8}>{r[3]}</Cell>
              </TableRow>
            ))}
          </TableRows>
          <PanelFooter>
            <PagerIcon kind="first" off />
            <PagerIcon kind="prev" off />
            <PagerIcon kind="next" />
            <PagerIcon kind="last" />
            <PagerEnd>
              <SearchGlyph size={14} color="#c3d2e6" />
            </PagerEnd>
          </PanelFooter>
        </Panel>
      </Workspace>
      <BottomEdge />
    </Page>
  );
}
